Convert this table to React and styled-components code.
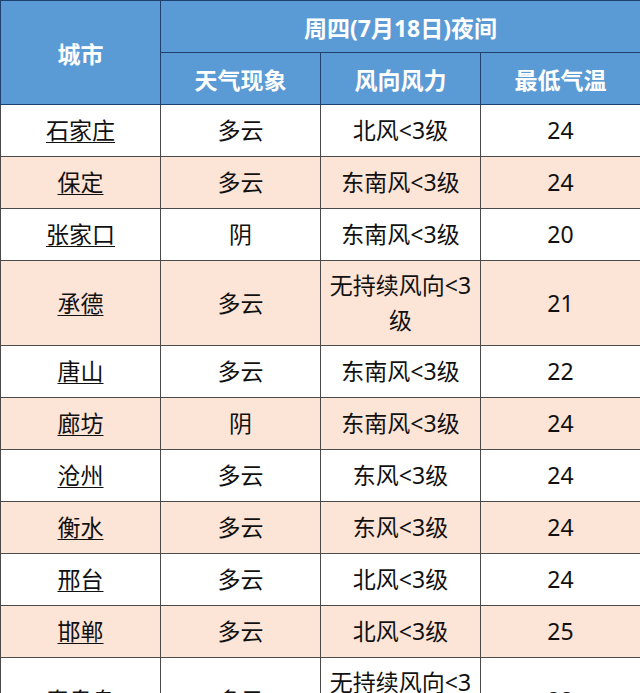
import React from "react";
import styled, { createGlobalStyle } from "styled-components";

const Global = createGlobalStyle`
  html, body { margin: 0; padding: 0; background: #ffffff; }
  body { font-family: "Noto Sans", "Noto Sans CJK SC", sans-serif; overflow: hidden; }
`;

const Table = styled.table`
  width: 640px;
  border-collapse: collapse;
  table-layout: fixed;
  font-size: 23px;
  color: #111;
`;

const HeadCell = styled.th`
  background: #5b9bd5;
  color: #ffffff;
  font-weight: 700;
  height: 51px;
  padding: 0;
  text-align: center;
  vertical-align: middle;
  border: 1px solid #1f3f6e;
`;

const Row = styled.tr`
  background: ${(p) => (p.$alt ? "#fce4d6" : "#ffffff")};
`;

const Cell = styled.td`
  height: ${(p) => (p.$tall ? 84 : 51)}px;
  padding: 0 7px;
  text-align: center;
  vertical-align: middle;
  line-height: 35px;
  border: 1px solid #4a4a4a;
`;

const City = styled.span`
  text-decoration: underline;
  text-underline-offset: 3px;
  text-decoration-thickness: 1px;
`;

const rows = [
  ["石家庄", "多云", "北风<3级", "24"],
  ["保定", "多云", "东南风<3级", "24"],
  ["张家口", "阴", "东南风<3级", "20"],
  ["承德", "多云", "无持续风向<3级", "21", true],
  ["唐山", "多云", "东南风<3级", "22"],
  ["廊坊", "阴", "东南风<3级", "24"],
  ["沧州", "多云", "东风<3级", "24"],
  ["衡水", "多云", "东风<3级", "24"],
  ["邢台", "多云", "北风<3级", "24"],
  ["邯郸", "多云", "北风<3级", "25"],
  ["秦皇岛", "多云", "无持续风向<3级", "22", true],
];

export default function App() {
  return (
    <>
      <Global />
      <Table>
        <colgroup>
          <col style={{ width: 160 }} />
          <col style={{ width: 160 }} />
          <col style={{ width: 160 }} />
          <col style={{ width: 160 }} />
        </colgroup>
        <thead>
          <tr>
            <HeadCell rowSpan={2}>城市</HeadCell>
            <HeadCell colSpan={3}>周四(7月18日)夜间</HeadCell>
          </tr>
          <tr>
            <HeadCell>天气现象</HeadCell>
            <HeadCell>风向风力</HeadCell>
            <HeadCell>最低气温</HeadCell>
          </tr>
        </thead>
        <tbody>
          {rows.map((r, i) => (
            <Row key={r[0]} $alt={i % 2 === 1}>
              <Cell $tall={r[4]}>
                <City>{r[0]}</City>
              </Cell>
              <Cell $tall={r[4]}>{r[1]}</Cell>
              <Cell $tall={r[4]}>{r[2]}</Cell>
              <Cell $tall={r[4]}>{r[3]}</Cell>
            </Row>
          ))}
        </tbody>
      </Table>
    </>
  );
}
